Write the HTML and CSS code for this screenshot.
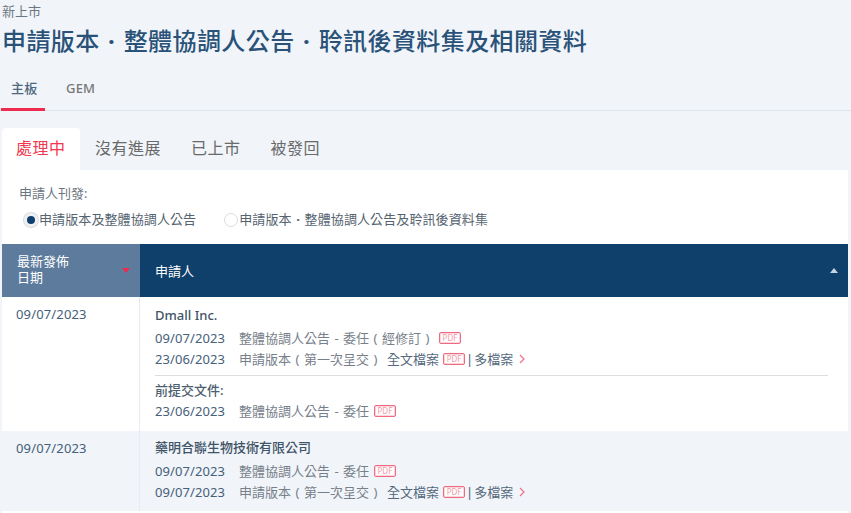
FILE: index.html
```html
<!DOCTYPE html>
<html lang="zh-Hant">
<head>
<meta charset="utf-8">
<title>新上市</title>
<link rel="stylesheet" href="styles.css">
</head>
<body>
<header class="head">
  <div class="crumb">新上市</div>
  <h1 class="title">申請版本<span class="mid">·</span>整體協調人公告<span class="mid">·</span>聆訊後資料集及相關資料</h1>
</header>
<nav class="board-tabs">
  <a class="board-tab active">主板</a>
  <a class="board-tab">GEM</a>
</nav>
<div class="status-tabs">
  <a class="status-tab active">處理中</a>
  <a class="status-tab">沒有進展</a>
  <a class="status-tab">已上市</a>
  <a class="status-tab">被發回</a>
</div>
<main class="panel">
  <div class="filter-label">申請人刊發:</div>
  <div class="radios">
    <label class="radio on"><span class="dot"></span>申請版本及整體協調人公告</label>
    <label class="radio"><span class="dot"></span>申請版本<span class="mid">·</span>整體協調人公告及聆訊後資料集</label>
  </div>
  <div class="table">
    <div class="th th-date"><span class="th-label">最新發佈<br>日期</span><i class="arrow-down"></i></div>
    <div class="th th-name"><span>申請人</span><i class="arrow-up"></i></div>

    <div class="td-date">09/07/2023</div>
    <div class="td-main">
      <div class="name">Dmall Inc.</div>
      <div class="line"><span class="d">09/07/2023</span><span class="t">整體協調人公告 - 委任<span class="p">(</span>經修訂<span class="p">)</span></span><span class="pdf">PDF</span></div>
      <div class="line"><span class="d">23/06/2023</span><span class="t">申請版本<span class="p">(</span>第一次呈交<span class="p">)</span></span><span class="l">全文檔案</span><span class="pdf">PDF</span><span class="sep">|</span><span class="l">多檔案</span><svg class="chev" viewBox="0 0 6 10"><path d="M1 1l4 4-4 4"/></svg></div>
      <div class="rule"></div>
      <div class="prev">前提交文件:</div>
      <div class="line"><span class="d">23/06/2023</span><span class="t">整體協調人公告 - 委任</span><span class="pdf">PDF</span></div>
    </div>

    <div class="td-date alt">09/07/2023</div>
    <div class="td-main alt">
      <div class="name">藥明合聯生物技術有限公司</div>
      <div class="line"><span class="d">09/07/2023</span><span class="t">整體協調人公告 - 委任</span><span class="pdf">PDF</span></div>
      <div class="line"><span class="d">09/07/2023</span><span class="t">申請版本<span class="p">(</span>第一次呈交<span class="p">)</span></span><span class="l">全文檔案</span><span class="pdf">PDF</span><span class="sep">|</span><span class="l">多檔案</span><svg class="chev" viewBox="0 0 6 10"><path d="M1 1l4 4-4 4"/></svg></div>
    </div>
  </div>
</main>
</body>
</html>
```
FILE: styles.css
```css
* { box-sizing: border-box; }
html, body { margin: 0; height: 513px; overflow: hidden; }
body {
  background: #f1f5f9;
  font-family: "Noto Sans", "Noto Sans CJK TC", sans-serif;
  color: #6a6f74;
}
.head { padding: 3px 0 0 2px; height: 70px; }
.crumb { font-size: 13px; line-height: 17px; color: #6d7680; }
.title {
  margin: 3px 0 0;
  font-size: 24px;
  line-height: 36px;
  font-weight: 500;
  letter-spacing: 0.42px;
  color: #2a5279;
}
.mid { display: inline-block; width: 1em; text-align: center; font-weight: 700; }
.board-tabs {
  display: flex;
  height: 41px;
  border-bottom: 1px solid #dde5ec;
}
.board-tab {
  height: 41px;
  padding: 9px 0 0;
  font-size: 13px;
  line-height: 18px;
  font-weight: 500;
  color: #777;
  margin-left: 21px;
  letter-spacing: 0.2px;
}
.board-tab.active {
  width: 44px;
  margin-left: 1px;
  padding-left: 10px;
  color: #4f6880;
  border-bottom: 3px solid #ee2a4d;
}
.status-tabs {
  display: flex;
  margin: 17px 0 0 2px;
  height: 42px;
}
.status-tab {
  padding: 0 15px;
  font-size: 16px;
  line-height: 41px;
  color: #6a6a6a;
  letter-spacing: 0.5px;
}
.status-tab.active {
  width: 78px;
  padding: 0 0 0 14px;
  background: #fff;
  color: #f0384f;
  border-radius: 4px 4px 0 0;
}
.panel {
  margin: 0 3px 0 2px;
  background: #fff;
  height: 343px;
}
.filter-label {
  padding: 15px 0 0 17px;
  font-size: 13px;
  line-height: 17px;
  color: #6d7680;
}
.radios { display: flex; margin-top: 9px; padding-left: 22px; height: 17px; }
.radio {
  display: flex;
  align-items: center;
  font-size: 13px;
  line-height: 17px;
  color: #55636f;
  letter-spacing: 0.1px;
  margin-right: 28px;
}
.dot {
  width: 14px;
  height: 14px;
  margin-right: 1px;
  border: 1px solid #dcdcdc;
  border-radius: 50%;
  background: #fff;
}
.radio.on .dot { border: 3px solid #eef1f4; background: #0f3f6b; box-shadow: 0 0 0 1px #dcdcdc; }
.table {
  display: grid;
  grid-template-columns: 138px 1fr;
  grid-template-rows: 53px 134px 80px;
  margin-top: 16px;
}
.th {
  display: flex;
  align-items: center;
  font-size: 13px;
  line-height: 16px;
  color: #fff;
  padding-left: 15px;
}
.th-label { margin-bottom: 4px; }
.th-date { background: #5d7b9c; justify-content: space-between; padding-right: 10px; }
.th-name { background: #0f3f6b; justify-content: space-between; padding-right: 10px; }
.arrow-down { border: 4px solid transparent; border-top: 5px solid #ee2a4d; border-bottom: 0; }
.arrow-up { border: 4px solid transparent; border-bottom: 5px solid #c9d3dd; border-top: 0; }
.td-date {
  padding: 8px 0 0 14px;
  font-size: 13px;
  line-height: 18px;
  letter-spacing: 0.15px;
  color: #45607a;
  border-right: 1px solid #e6ecf1;
}
.td-main { padding: 10px 20px 0 15px; }
.td-main.alt { padding-top: 8px; }
.alt { background: #f1f5f9; }
.name {
  font-size: 13px;
  line-height: 17px;
  font-weight: 500;
  color: #3f5468;
  height: 20px;
}
.td-main.alt .name { height: 21px; }
.line {
  display: flex;
  align-items: center;
  height: 21px;
  font-size: 13px;
  white-space: nowrap;
}
.d { width: 84px; letter-spacing: 0.1px; color: #45607a; }
.t { color: #77808a; margin-right: 5px; word-spacing: 1px; }
.p { display: inline-block; width: 13px; text-align: center; }
.l { color: #55697c; margin-right: 4px; }
.pdf {
  display: inline-block;
  width: 22px;
  height: 12px;
  border: 1px solid #ee6a7f;
  box-shadow: inset 0 0 0 1px #fbd5db;
  border-radius: 2px;
  font-size: 8px;
  line-height: 10px;
  text-align: center;
  color: #f39aa8;
  background: #fff;
}
.sep { margin: 0 1px 0 1px; color: #45607a; }
.chev { width: 6px; height: 10px; margin-left: 2px; fill: none; stroke: #f0708a; stroke-width: 1.2; }
.rule { height: 1px; background: #dcdfe2; margin: 6px 0 0; }
.prev { font-size: 13px; line-height: 17px; font-weight: 500; color: #4d5e6e; margin-top: 6px; height: 18px; }
```
